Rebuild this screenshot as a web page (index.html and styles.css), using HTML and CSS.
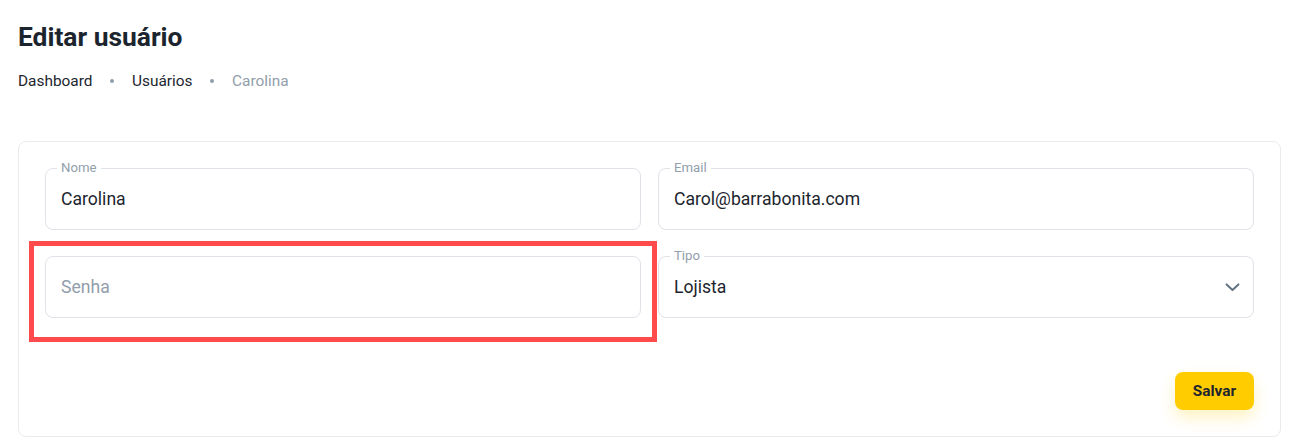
FILE: index.html
```html
<!DOCTYPE html>
<html lang="pt-BR">
<head>
<meta charset="utf-8">
<title>Editar usuário</title>
<link rel="stylesheet" href="styles.css">
</head>
<body>
<main class="page">
  <h1 class="title">Editar usuário</h1>
  <nav class="crumbs">
    <span class="crumb">Dashboard</span>
    <span class="dot"></span>
    <span class="crumb">Usuários</span>
    <span class="dot"></span>
    <span class="crumb current">Carolina</span>
  </nav>
  <section class="card">
    <div class="grid">
      <div class="field">
        <span class="label">Nome</span>
        <span class="value">Carolina</span>
      </div>
      <div class="field">
        <span class="label">Email</span>
        <span class="value">Carol@barrabonita.com</span>
      </div>
      <div class="field nolabel">
        <span class="placeholder">Senha</span>
        <span class="highlight"></span>
      </div>
      <div class="field select">
        <span class="label">Tipo</span>
        <span class="value">Lojista</span>
        <svg class="chev" width="15" height="9" viewBox="0 0 15 9"><path d="M1.6 1.4 L7.5 7 L13.4 1.4" fill="none" stroke="#637381" stroke-width="2" stroke-linecap="round" stroke-linejoin="round"/></svg>
      </div>
    </div>
    <div class="actions">
      <button class="btn" type="button">Salvar</button>
    </div>
  </section>
</main>
</body>
</html>
```

FILE: styles.css
```css
* { box-sizing: border-box; }
html, body { margin: 0; background: #fff; }
body {
  font-family: Roboto, "Noto Sans", Arial, sans-serif;
  color: #1c2536;
}
.page {
  padding: 21px 20px 0 18px;
}
.title {
  margin: 0;
  font-size: 26.4px;
  line-height: 32px;
  font-weight: 700;
  color: #1c252e;
}
.crumbs {
  display: flex;
  align-items: center;
  margin-top: 17px;
  font-size: 15.4px;
  line-height: 22px;
  color: #1c252e;
}
.crumb.current { color: #919eab; }
.dot {
  width: 4.4px;
  height: 4.4px;
  border-radius: 50%;
  background: #919eab;
  margin: 0 17.6px;
}
.card {
  margin-top: 49px;
  border: 1px solid #e9ebee;
  border-radius: 8px;
  padding: 26px;
}
.grid {
  display: grid;
  grid-template-columns: 1fr 1fr;
  column-gap: 17px;
  row-gap: 26px;
}
.field {
  position: relative;
  height: 62px;
  border: 1px solid #dfe3e8;
  border-radius: 8px;
  display: flex;
  align-items: center;
  padding: 0 15px;
  font-size: 17.6px;
}
.label {
  position: absolute;
  top: -8px;
  left: 11px;
  padding: 0 4px;
  background: #fff;
  font-size: 13.2px;
  line-height: 14px;
  color: #919eab;
}
.value { color: #1c252e; }
.placeholder { color: #919eab; }
.select { justify-content: space-between; }
.chev { margin-right: -2px; }
.highlight {
  position: absolute;
  top: -16px;
  left: -17px;
  right: -17px;
  bottom: -25px;
  border: 5px solid #ff4b4b;
  pointer-events: none;
}
.actions {
  display: flex;
  justify-content: flex-end;
  margin-top: 54px;
}
.btn {
  font-family: inherit;
  font-size: 15.4px;
  font-weight: 700;
  color: #1c252e;
  background: #ffcc00;
  border: 0;
  border-radius: 8px;
  width: 79px;
  height: 38px;
  box-shadow: 0 8px 16px rgba(255, 204, 0, 0.24);
}
```
